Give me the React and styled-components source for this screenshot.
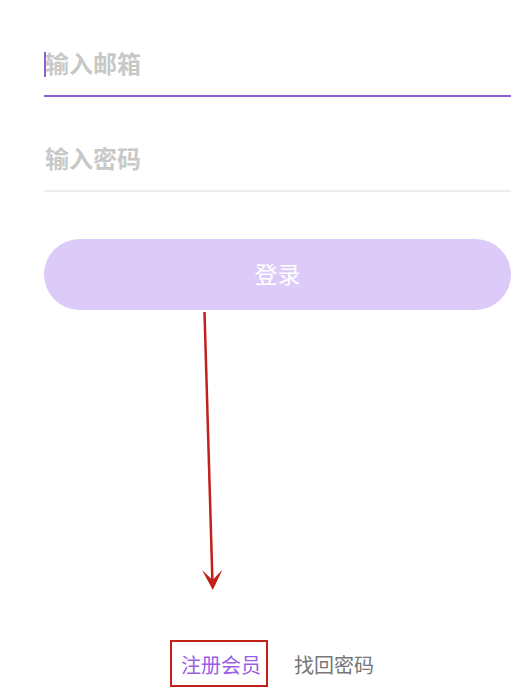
import React from "react";
import styled, { createGlobalStyle } from "styled-components";

const GlobalStyle = createGlobalStyle`
  html, body {
    margin: 0;
    padding: 0;
    background: #ffffff;
  }
  body {
    font-family: "Noto Sans CJK SC", "Noto Sans", sans-serif;
  }
`;

const Page = styled.div`
  position: relative;
  display: flex;
  flex-direction: column;
  height: 100vh;
  padding: 35px 16px 0 44px;
  box-sizing: border-box;
  overflow: hidden;
`;

const Form = styled.form`
  display: flex;
  flex-direction: column;
  gap: 33px;
  margin: 0;
`;

const Field = styled.div`
  position: relative;
  border-bottom: 2px solid ${({ active }) => (active ? "#8b5fd8" : "#ededed")};
`;

const Input = styled.input`
  display: block;
  width: 100%;
  height: 60px;
  padding: 0 0 5px 1px;
  margin: 0;
  border: none;
  outline: none;
  background: transparent;
  font-family: inherit;
  font-size: 24px;
  font-weight: 700;
  color: #333;
  box-sizing: border-box;

  &::placeholder {
    color: #c8c8c8;
  }
`;

const Caret = styled.span`
  position: absolute;
  left: 0;
  top: 17px;
  width: 2px;
  height: 25px;
  background: #8b5fd8;
`;

const LoginButton = styled.button`
  margin-top: 14px;
  height: 71px;
  padding: 0 0 4px;
  border: none;
  border-radius: 36px;
  background: #dccaf8;
  color: #ffffff;
  font-family: inherit;
  font-size: 23px;
  cursor: pointer;
`;

const Footer = styled.div`
  position: relative;
  margin-top: auto;
  display: flex;
  justify-content: center;
  gap: 33px;
  padding-bottom: 14px;
`;

const LinkText = styled.a`
  font-size: 20px;
  line-height: 28px;
  color: ${({ primary }) => (primary ? "#9a5fe4" : "#777777")};
  text-decoration: none;
`;

const LinkWrap = styled.span`
  position: relative;
`;

const Highlight = styled.span`
  position: absolute;
  left: -11px;
  right: -7px;
  top: -11px;
  bottom: -8px;
  border: 2.5px solid #c1211b;
  pointer-events: none;
`;

const Annotation = styled.svg`
  position: absolute;
  left: 0;
  top: 0;
  pointer-events: none;
`;

export default function App() {
  return (
    <>
      <GlobalStyle />
      <Page>
        <Form onSubmit={(e) => e.preventDefault()}>
          <Field active>
            <Input type="email" placeholder="输入邮箱" />
            <Caret />
          </Field>
          <Field>
            <Input type="password" placeholder="输入密码" />
          </Field>
          <LoginButton type="submit">登录</LoginButton>
        </Form>
        <Footer>
          <LinkWrap>
            <LinkText primary href="#">注册会员</LinkText>
            <Highlight />
          </LinkWrap>
          <LinkText href="#">找回密码</LinkText>
        </Footer>
        <Annotation width="527" height="693" viewBox="0 0 527 693">
          <line x1="204.5" y1="312" x2="212.5" y2="584" stroke="#c1211b" strokeWidth="2.5" />
          <path d="M202 570 L212.8 590 L222.5 569.5 L212.6 580 Z" fill="#c1211b" />
        </Annotation>
      </Page>
    </>
  );
}
